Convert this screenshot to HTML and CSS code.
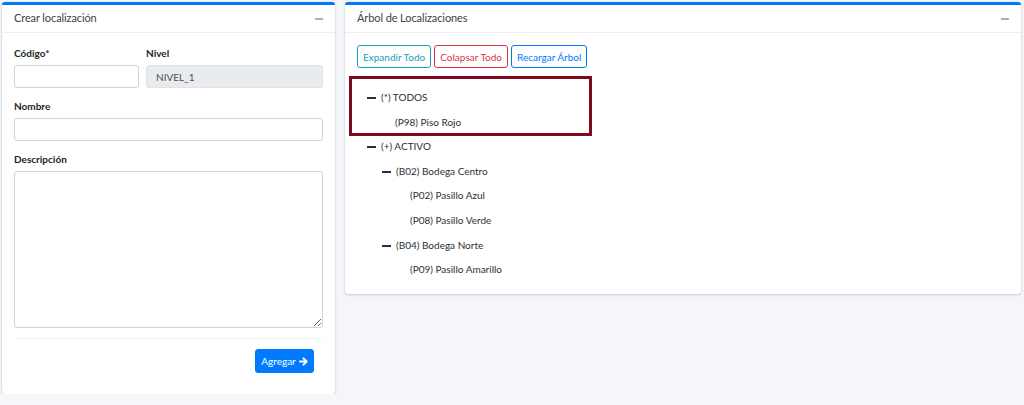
FILE: index.html
```html
<!DOCTYPE html>
<html lang="es">
<head>
  <meta charset="UTF-8" />
  <title>Localizaciones</title>
  <link rel="stylesheet" href="styles.css">
</head>
<body>
  <div class="fila">
    <div class="card card-form">
      <div class="card-header">
        <span class="card-title">Crear localización</span>
        <span class="minimizar"></span>
      </div>
      <div class="card-body">
        <div class="fila-campos">
          <div class="campo campo-codigo">
            <label>Código*</label>
            <input type="text" class="control" />
          </div>
          <div class="campo campo-nivel">
            <label>Nivel</label>
            <input type="text" class="control" value="NIVEL_1" disabled />
          </div>
        </div>
        <div class="campo">
          <label>Nombre</label>
          <input type="text" class="control" />
        </div>
        <div class="campo campo-ultimo">
          <label>Descripción</label>
          <textarea class="control area"></textarea>
        </div>
        <div class="pie">
          <button class="btn-agregar">Agregar
            <svg width="9" height="9" viewBox="0 0 10 10"><path d="M1 5h7M5 1.5 8.5 5 5 8.5" stroke="#fff" stroke-width="2.2" fill="none" stroke-linecap="round" stroke-linejoin="round"/></svg>
          </button>
        </div>
      </div>
    </div>

    <div class="card card-arbol">
      <div class="card-header">
        <span class="card-title">Árbol de Localizaciones</span>
        <span class="minimizar"></span>
      </div>
      <div class="card-body">
        <div class="acciones">
          <button class="btn btn-info">Expandir Todo</button>
          <button class="btn btn-danger">Colapsar Todo</button>
          <button class="btn btn-primary">Recargar Árbol</button>
        </div>
        <div class="arbol">
          <div class="resaltado"></div>
          <div class="nodo n0"><span class="guion"></span>(*) TODOS</div>
          <div class="nodo n1">(P98) Piso Rojo</div>
          <div class="nodo n0"><span class="guion"></span>(+) ACTIVO</div>
          <div class="nodo n1"><span class="guion"></span>(B02) Bodega Centro</div>
          <div class="nodo n2">(P02) Pasillo Azul</div>
          <div class="nodo n2">(P08) Pasillo Verde</div>
          <div class="nodo n1"><span class="guion"></span>(B04) Bodega Norte</div>
          <div class="nodo n2">(P09) Pasillo Amarillo</div>
        </div>
      </div>
    </div>
  </div>
</body>
</html>
```

FILE: styles.css
```css
body {
  margin: 0;
  background-color: #f4f6f9;
  font-family: Lato, "Open Sans", sans-serif;
  font-size: 11px;
  color: #212529;
}

.fila {
  display: flex;
  align-items: flex-start;
  gap: 10px;
  padding: 2px 3px 0 2px;
}

.card {
  background: #fff;
  border-top: 3px solid #007bff;
  border-radius: 3px;
  box-shadow: 0 0 1px rgba(0, 0, 0, 0.2), 0 1px 3px rgba(0, 0, 0, 0.15);
}

.card-form {
  width: 333px;
  height: 389px;
}

.card-arbol {
  flex: 1;
  height: 289px;
  position: relative;
}

.card-header {
  height: 28px;
  box-sizing: border-box;
  border-bottom: 1px solid #eceef0;
  display: flex;
  align-items: center;
  justify-content: space-between;
  padding: 0 12px 3px 12px;
}

.card-title {
  font-size: 11px;
  letter-spacing: -0.1px;
  color: #3d4248;
}

.minimizar {
  width: 8px;
  height: 2px;
  background: #a9afb5;
  margin-top: 4px;
}

.card-form .card-body {
  padding: 14px 12px 0 12px;
}

.fila-campos {
  display: flex;
  gap: 7px;
}

.campo-codigo {
  width: 125px;
}

.campo-nivel {
  flex: 1;
}

label {
  display: block;
  font-weight: bold;
  font-size: 10px;
  margin-bottom: 6px;
  color: #212529;
}

.campo {
  margin-bottom: 12px;
}

.campo-ultimo {
  margin-bottom: 10px;
}

.control {
  box-sizing: border-box;
  width: 100%;
  height: 23px;
  border: 1px solid #ced4da;
  border-radius: 3px;
  background: #fff;
  font-family: inherit;
  font-size: 10px;
  padding: 0 9px;
  color: #495057;
}

.control:disabled {
  background: #e9ecef;
  border-color: #dfe3e7;
}

.area {
  height: 157px;
  resize: vertical;
  display: block;
}

.pie {
  border-top: 1px solid #f0f1f3;
  padding-top: 10px;
  display: flex;
  justify-content: flex-end;
  padding-right: 9px;
}

.btn-agregar {
  height: 24px;
  width: 59px;
  background: #007bff;
  border: 1px solid #007bff;
  border-radius: 3px;
  color: #fff;
  font-family: inherit;
  font-size: 10px;
  display: flex;
  align-items: center;
  justify-content: center;
  gap: 3px;
  padding: 0;
}

.card-arbol .card-body {
  padding: 12px 12px 0 12px;
}

.acciones {
  display: flex;
  gap: 3px;
}

.btn {
  height: 23px;
  background: #fff;
  border-radius: 3px;
  font-family: inherit;
  font-size: 10px;
  padding: 0 5px;
}

.btn-info {
  border: 1px solid #17a2b8;
  color: #17a2b8;
}

.btn-danger {
  border: 1px solid #dc3545;
  color: #dc3545;
}

.btn-primary {
  border: 1px solid #007bff;
  color: #007bff;
}

.arbol {
  padding-top: 23px;
}

.resaltado {
  position: absolute;
  left: 4px;
  top: 71px;
  width: 237px;
  height: 54px;
  border: 3px solid #7d0a1f;
}

.nodo {
  height: 24.6px;
  display: flex;
  align-items: flex-start;
  font-size: 10px;
  color: #2b3035;
}

.guion {
  width: 9px;
  height: 2px;
  background: #2b3035;
  margin: 6px 5px 0 0;
}

.n0 {
  padding-left: 10px;
}

.n1 {
  padding-left: 38px;
}

.n1 .guion {
  margin-left: -13px;
}

.n2 {
  padding-left: 53px;
}
```
